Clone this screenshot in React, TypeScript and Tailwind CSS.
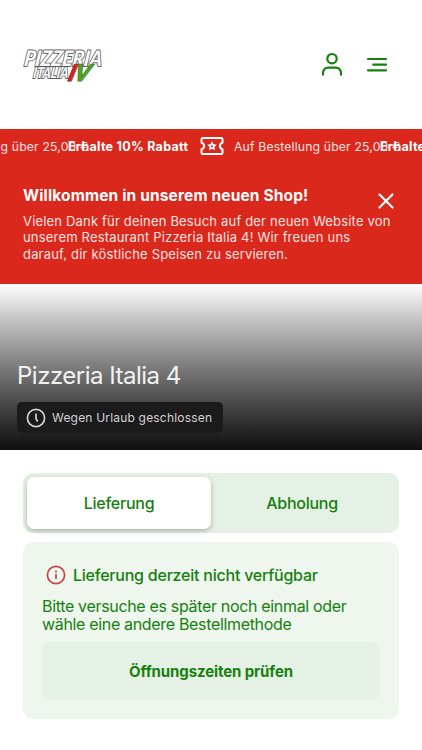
import { X } from "lucide-react";

const promos = [0, 1, 2];

function Logo() {
  const letters = {
    fontFamily: "Lato",
    fontStyle: "italic",
    fontWeight: 900,
    paintOrder: "stroke",
    strokeLinejoin: "round",
  } as const;

  return (
    <svg width="80" height="36" viewBox="0 0 80 36" className="overflow-visible" aria-label="Pizzeria Italia IV">
      <g {...letters}>
        <g transform="skewX(-8)" fill="#fff" stroke="#5a5a5a" strokeWidth="1.8">
          <text x="3" y="18.5" fontSize="21.5" textLength="78" lengthAdjust="spacingAndGlyphs">
            PIZZERIA
          </text>
          <text x="14" y="31" fontSize="15" textLength="35" lengthAdjust="spacingAndGlyphs">
            ITALIA
          </text>
        </g>
        <g transform="skewX(-16)" strokeWidth="1.2">
          <text x="54" y="34.5" fontSize="23" fill="#d8232a" stroke="#7d2020">
            I
          </text>
          <text x="60" y="34.5" fontSize="23" fill="#4ea51c" stroke="#35691c">
            V
          </text>
        </g>
      </g>
    </svg>
  );
}

function UserIcon() {
  return (
    <svg width="24" height="26" viewBox="0 0 24 26" fill="none" stroke="#16800f" strokeWidth="2.2" strokeLinecap="round">
      <circle cx="12" cy="6.700" r="4.700" />
      <path d="M3 22.700v-2a5 5 0 0 1 5-5h8a5 5 0 0 1 5 5v2" />
    </svg>
  );
}

function MenuIcon() {
  return (
    <svg width="22" height="16" viewBox="0 0 22 16" fill="none" stroke="#16800f" strokeWidth="2.2" strokeLinecap="round">
      <path d="M2 2h18M7.200 7.700H20M2 13.300h18" />
    </svg>
  );
}

function TicketIcon() {
  return (
    <svg width="24" height="20" viewBox="0 0 24 20" fill="none" stroke="#fff" strokeWidth="2" strokeLinejoin="round">
      <path d="M3 2h18a1.5 1.5 0 0 1 1.5 1.5v3.2a3.4 3.4 0 0 0 0 6.6v3.2A1.5 1.5 0 0 1 21 18H3a1.5 1.5 0 0 1-1.5-1.5v-3.2a3.4 3.4 0 0 0 0-6.6V3.5A1.5 1.5 0 0 1 3 2z" />
      <path fill="#fff" stroke="none" d="M12 5.2l1.5 3 3.3.5-2.4 2.3.6 3.3-3-1.5-3 1.5.6-3.3-2.4-2.3 3.3-.5z" />
      <circle cx="12" cy="10.2" r="1" fill="#db281c" stroke="none" />
    </svg>
  );
}

export default function App() {
  return (
    <div className="h-[750px] w-[422px] overflow-hidden bg-white font-['Inter',sans-serif]">
      <header className="flex h-[129px] items-center justify-between pr-[34px] pl-[23px]">
        <Logo />
        <div className="flex items-center gap-[22px]">
          <UserIcon />
          <MenuIcon />
        </div>
      </header>

      {/* Promo ticker */}
      <div className="flex h-[34px] overflow-hidden bg-[#db281c] text-white">
        <div className="-ml-[244px] flex items-center">
          {promos.map((i) => (
            <div key={i} className="flex w-[312px] shrink-0 items-center whitespace-nowrap">
              <span className="w-[132px] shrink-0 pt-0.5 text-[12.5px] font-bold tracking-[0.28px]">Erhalte 10% Rabatt</span>
              <span className="mr-[10px] shrink-0">
                <TicketIcon />
              </span>
              <span className="pt-0.5 text-[12.2px] tracking-[0.17px] text-[#fde3e0]">Auf Bestellung über 25,00 €</span>
            </div>
          ))}
        </div>
      </div>

      {/* Welcome notice */}
      <section className="relative h-[121px] bg-[#db281c] pt-[23px] pl-[23px] text-white">
        <h2 className="text-[15.5px] leading-5 font-bold tracking-[0.14px]">Willkommen in unserem neuen Shop!</h2>
        <p className="mt-[7px] text-[13px] leading-[16.3px] tracking-[0.18px] whitespace-nowrap text-[#fde3e0]">
          Vielen Dank für deinen Besuch auf der neuen Website von
          <br />
          unserem Restaurant Pizzeria Italia 4! Wir freuen uns
          <br />
          darauf, dir köstliche Speisen zu servieren.
        </p>
        <button className="absolute top-[25px] right-[23px]" aria-label="Schließen">
          <X size={26} strokeWidth={2} />
        </button>
      </section>

      {/* Restaurant hero */}
      <section className="h-[166px] bg-linear-to-b from-white to-[#101010] pt-[77px] pl-[17px]">
        <h1 className="text-[24px] leading-[30px] tracking-[-0.5px] text-[#f2f2f2]">Pizzeria Italia 4</h1>
        <div className="mt-[11px] flex h-[31px] w-[206px] items-center gap-[6px] rounded-[5px] bg-[#1b1b1b] pl-[9px] text-[#d2d2d2]">
          <svg width="20" height="20" viewBox="0 0 20 20" fill="none" stroke="currentColor" strokeWidth="1.7" strokeLinecap="round">
            <circle cx="10" cy="10" r="8.6" />
            <path d="M10 6v4.5l1.300 2.500" />
          </svg>
          <span className="text-[12px] tracking-[0.19px] whitespace-nowrap">Wegen Urlaub geschlossen</span>
        </div>
      </section>

      <main className="px-[23px] pt-[23px] text-[#16800f]">
        <div className="flex h-[60px] rounded-[10px] bg-[#e5f1e5] p-1 text-[16px] font-medium tracking-[-0.25px]">
          <button className="h-[52px] w-[184px] rounded-[7px] bg-white shadow-[0_2px_5px_rgba(0,0,0,0.25)]">Lieferung</button>
          <button className="flex-1 pr-0.5">Abholung</button>
        </div>

        <section className="mt-[9px] h-[177px] rounded-[10px] bg-[#eef6ee] px-[19px] pt-[23px]">
          <div className="flex h-5 items-center gap-[7px] pl-1">
            <svg width="20" height="20" viewBox="0 0 20 20" fill="none" stroke="#c34747" strokeWidth="1.7">
              <circle cx="10" cy="10" r="8.6" />
              <path d="M10 9v5M10 5.5v2" />
            </svg>
            <h3 className="text-[16px] font-medium tracking-[-0.23px] whitespace-nowrap">Lieferung derzeit nicht verfügbar</h3>
          </div>
          <p className="mt-[12px] text-[16px] leading-[18px] tracking-[-0.33px] whitespace-nowrap">
            Bitte versuche es später noch einmal oder
            <br />
            wähle eine andere Bestellmethode
          </p>
          <button className="mt-[9px] h-[58px] w-full rounded-[8px] bg-[#e5f1e5] pt-0.5 text-[15px] font-bold tracking-[-0.1px]">
            Öffnungszeiten prüfen
          </button>
        </section>
      </main>
    </div>
  );
}
